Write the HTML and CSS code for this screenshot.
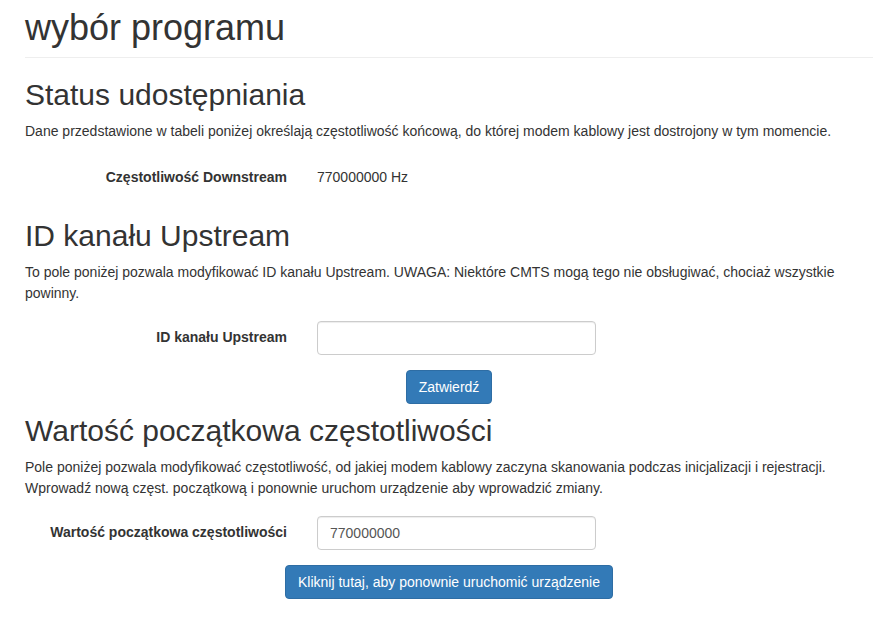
FILE: index.html
```html
<!DOCTYPE html>
<html lang="pl">
<head>
<meta charset="utf-8">
<title>wybór programu</title>
<link rel="stylesheet" href="styles.css">
</head>
<body>
<div class="container">
  <div class="page-header">
    <h1>wybór programu</h1>
  </div>

  <section class="section section-status">
    <h2>Status udostępniania</h2>
    <p>Dane przedstawione w tabeli poniżej określają częstotliwość końcową, do której modem kablowy jest dostrojony w tym momencie.</p>
    <div class="form-row static-row">
      <div class="label">Częstotliwość Downstream</div>
      <div class="value">770000000 Hz</div>
    </div>
  </section>

  <section class="section section-upstream">
    <h2>ID kanału Upstream</h2>
    <p>To pole poniżej pozwala modyfikować ID kanału Upstream. UWAGA: Niektóre CMTS mogą tego nie obsługiwać, chociaż wszystkie powinny.</p>
    <div class="form-row">
      <label class="label" for="upid">ID kanału Upstream</label>
      <div class="value"><input id="upid" class="input" type="text" value=""></div>
    </div>
    <div class="actions">
      <button class="btn" type="button">Zatwierdź</button>
    </div>
  </section>

  <section class="section section-freq">
    <h2>Wartość początkowa częstotliwości</h2>
    <p>Pole poniżej pozwala modyfikować częstotliwość, od jakiej modem kablowy zaczyna skanowania podczas inicjalizacji i rejestracji. Wprowadź nową częst. początkową i ponownie uruchom urządzenie aby wprowadzić zmiany.</p>
    <div class="form-row">
      <label class="label" for="freq">Wartość początkowa częstotliwości</label>
      <div class="value"><input id="freq" class="input" type="text" value="770000000"></div>
    </div>
    <div class="actions">
      <button class="btn" type="button">Kliknij tutaj, aby ponownie uruchomić urządzenie</button>
    </div>
  </section>
</div>
</body>
</html>
```

FILE: styles.css
```css
html, body {
  margin: 0;
  padding: 0;
  background: #fff;
}
body {
  font-family: "Liberation Sans", Arial, sans-serif;
  font-size: 14px;
  line-height: 21px;
  color: #333;
}
.container {
  padding: 0 15px 0 25px;
}
.page-header {
  margin-top: 8px;
  padding-bottom: 9px;
  border-bottom: 1px solid #eee;
}
h1 {
  margin: 0;
  font-size: 36px;
  line-height: 39.6px;
  font-weight: 500;
}
h2 {
  margin: 0 0 10px;
  font-size: 30px;
  line-height: 33px;
  font-weight: 500;
}
p {
  margin: 0;
}
.section-status { padding-top: 20px; }
.section-upstream { padding-top: 24px; }
.section-freq { padding-top: 10px; }

.form-row {
  display: grid;
  grid-template-columns: 262px 279px;
  column-gap: 30px;
  align-items: center;
  min-height: 34px;
  margin-top: 17px;
}
.static-row { margin-top: 19px; }
.label {
  text-align: right;
  font-weight: bold;
}
.value { text-align: left; }
.input {
  box-sizing: border-box;
  display: block;
  width: 279px;
  height: 34px;
  padding: 6px 12px;
  font: inherit;
  font-size: 14px;
  color: #555;
  border: 1px solid #ccc;
  border-radius: 4px;
  box-shadow: inset 0 1px 1px rgba(0,0,0,.075);
  margin: 0;
}
.actions {
  display: flex;
  justify-content: center;
  margin-top: 15px;
}
.btn {
  height: 34px;
  padding: 6px 12px;
  font-family: "Liberation Sans", Arial, sans-serif;
  font-size: 14px;
  color: #fff;
  background: #337ab7;
  border: 1px solid #2e6da4;
  border-radius: 4px;
}
```
